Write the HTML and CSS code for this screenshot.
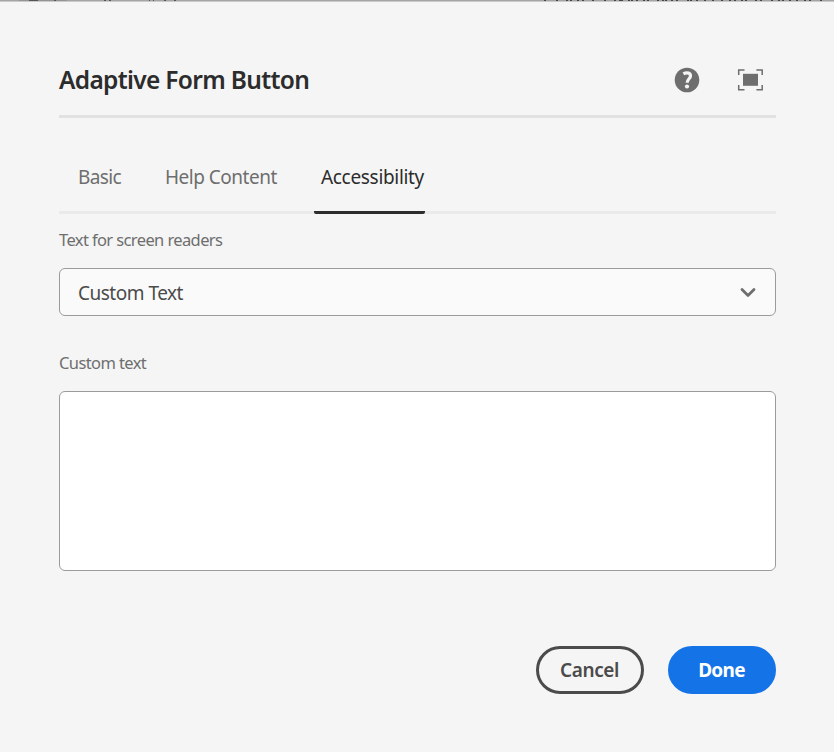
FILE: index.html
```html
<!DOCTYPE html>
<html lang="en">
<head>
<meta charset="utf-8">
<title>Adaptive Form Button</title>
<link rel="stylesheet" href="styles.css">
</head>
<body>
<svg class="backdrop" width="834" height="2" viewBox="0 0 834 2" shape-rendering="crispEdges" aria-hidden="true">
  <path fill="#a5a5a5" d="M0 0h834v1H0z"/>
  <path fill="#cacaca" d="M0 1h834v1H0z"/>
  <path fill="#949494" d="M19 0h48v1H19z"/>
  <path stroke="#555" d="M29 .5h9M54 .5h2M104 .5h2M109 .5h2M149 .5h1M153 .5h1M164 .5h2M174 .5h2"/>
  <path stroke="#444" d="M544 .5h2M556 .5h2M566 .5h2M570 .5h2M577 .5h2M582 .5h2M592 .5h2M604 .5h2M614 .5h2M619 .5h4M628 .5h2M631 .5h2M636 .5h2M643 .5h2M647 .5h2M657 .5h2M662 .5h2M665 .5h2M671 .5h2M676 .5h2M687 .5h2M690 .5h2M696 .5h2M704 .5h2M712 .5h2M721 .5h2M729 .5h2M734 .5h2M741 .5h2M745 .5h2M755 .5h2M760 .5h2M771 .5h2M778 .5h2M782 .5h2M789 .5h2M796 .5h2M804 .5h2M809 .5h2M820 .5h2"/>
</svg>
<main class="dialog">
  <header class="header">
    <h1 class="title">Adaptive Form Button</h1>
    <button class="icon-button" aria-label="Help">
      <svg width="26" height="26" viewBox="0 0 26 26"><circle cx="13" cy="13" r="12.3" fill="#6e6e6e"/><path d="M9.4 6.9Q11.1 5.9 12.9 5.9Q16.5 5.9 16.5 8.9C16.5 11.6 13.2 12.1 13.2 15.8" fill="none" stroke="#f5f5f5" stroke-width="3.2"/><circle cx="13" cy="19.5" r="2.1" fill="#f5f5f5"/></svg>
    </button>
    <button class="icon-button" aria-label="Fullscreen">
      <svg width="26" height="26" viewBox="0 0 26 26"><path d="M1.7 8V2.9h5.8M19.4 2.9h5.8V8M25.2 18v4.7h-5.8M7.5 22.7H1.7V18" fill="none" stroke="#6e6e6e" stroke-width="1.5"/><path d="M6 6.8h15v12H6z" fill="#6e6e6e"/></svg>
    </button>
  </header>
  <nav class="tabs">
    <a class="tab tab-basic">Basic</a>
    <a class="tab tab-help">Help Content</a>
    <a class="tab tab-access active">Accessibility</a>
  </nav>
  <div class="label label-reader">Text for screen readers</div>
  <div class="select">
    <span class="select-value">Custom Text</span>
    <svg width="18" height="12" viewBox="0 0 18 12"><path d="M3 2.5l6 6 6-6" fill="none" stroke="#6e6e6e" stroke-width="2.8" stroke-linecap="round" stroke-linejoin="round"/></svg>
  </div>
  <div class="label label-custom">Custom text</div>
  <textarea class="textarea" aria-label="Custom text"></textarea>
  <footer class="footer">
    <button class="button cancel"><span>Cancel</span></button>
    <button class="button done"><span>Done</span></button>
  </footer>
</main>
</body>
</html>
```
FILE: styles.css
```css
* { box-sizing: border-box; }
body {
  margin: 0;
  height: 752px;
  overflow: hidden;
  background: #f5f5f5;
  font-family: "Noto Sans", "Open Sans", sans-serif;
}
.backdrop { display: block; }
.dialog { padding: 0 58px 0 59px; }
.header {
  display: flex;
  align-items: center;
  height: 116px;
  padding: 43px 13px 0 0;
  border-bottom: 3px solid #e1e1e1;
}
.title {
  flex: 1;
  margin: -1px 0 0;
  color: #2c2c2c;
  font-size: 24.5px;
  font-weight: 600;
  line-height: 32px;
  letter-spacing: -0.68px;
  white-space: nowrap;
}
.icon-button {
  width: 26px;
  height: 26px;
  padding: 0;
  border: 0;
  background: none;
}
.icon-button + .icon-button { margin-left: 37px; }
.icon-button svg { display: block; }
.tabs {
  display: flex;
  height: 96px;
  padding: 0 0 0 12px;
  border-bottom: 3px solid #eaeaea;
}
.tab {
  height: 96px;
  padding: 46px 7px 0;
  color: #6e6e6e;
  font-size: 19px;
  line-height: 27px;
  white-space: nowrap;
}
.tab-basic { width: 87px; letter-spacing: -0.6px; }
.tab-help { width: 156px; letter-spacing: -0.5px; }
.tab-access { width: 111px; letter-spacing: -0.32px; }
.active {
  color: #2c2c2c;
  border-bottom: 3px solid #2c2c2c;
  border-radius: 2px;
}
.label {
  color: #6e6e6e;
  font-size: 16.5px;
  line-height: 24px;
  white-space: nowrap;
}
.label-reader { margin-top: 14px; letter-spacing: -0.61px; }
.label-custom { margin-top: 35px; letter-spacing: -0.6px; }
.select {
  display: flex;
  align-items: center;
  justify-content: space-between;
  height: 48px;
  margin-top: 16px;
  padding: 2px 18px 0 18px;
  border: 1px solid #9b9b9b;
  border-radius: 6px;
  background: #fafafa;
  color: #4b4b4b;
  font-size: 19px;
  letter-spacing: -0.5px;
}
.textarea {
  display: block;
  width: 717px;
  height: 180px;
  margin: 16px 0 0;
  border: 1px solid #9b9b9b;
  border-radius: 6px;
  background: #fff;
  resize: none;
}
.footer {
  display: flex;
  justify-content: flex-end;
  gap: 24px;
  margin-top: 75px;
}
.button {
  width: 108px;
  height: 48px;
  padding: 0 1px 0 0;
  border: 3px solid #4b4b4b;
  border-radius: 24px;
  background: transparent;
  color: #4b4b4b;
  font-family: inherit;
  font-size: 19px;
  font-weight: 700;
  letter-spacing: -0.7px;
}
.cancel { font-weight: 600; letter-spacing: -0.4px; }
.done {
  border-color: #1473e6;
  background: #1473e6;
  color: #fff;
}
```
